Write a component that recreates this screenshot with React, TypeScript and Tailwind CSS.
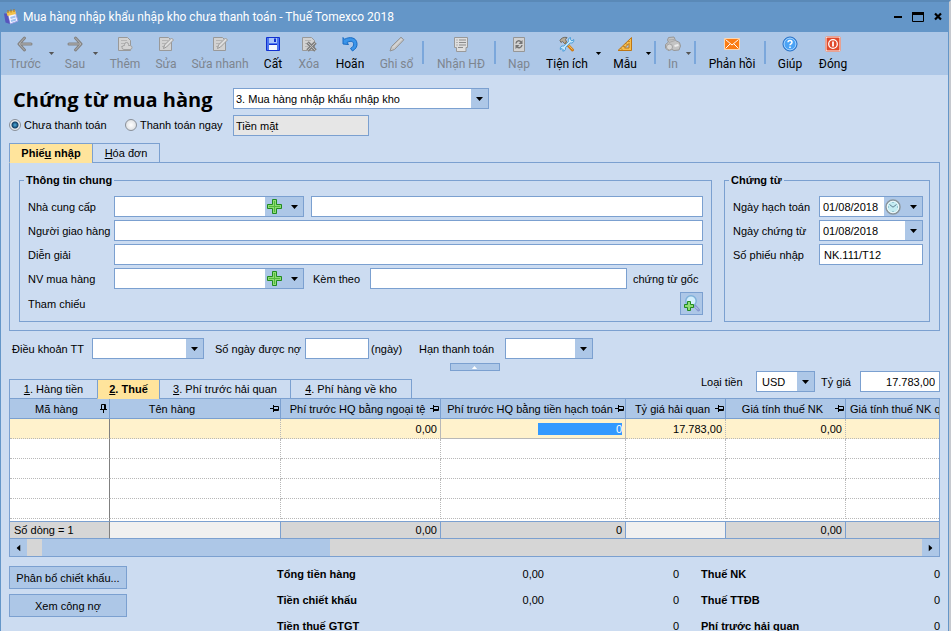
import type { ReactNode } from "react";
import clsx from "clsx";

const field =
  "h-[21px] min-w-0 border border-[#7ba0d0] bg-white px-1 text-[11px] leading-4 text-black outline-none";

function Caret({ className }: { className?: string }) {
  return (
    <svg className={clsx("h-1 w-[7px]", className)} viewBox="0 0 7 4" fill="currentColor">
      <path d="M0 0h7L3.500 4z" />
    </svg>
  );
}

function PlusIcon() {
  return (
    <svg className="h-4 w-4" viewBox="0 0 16 16">
      <path
        d="M5.500 .5h4v5h5v4h-5v5h-4v-5h-5v-4h5z"
        fill="#8fdc74"
        stroke="#218a21"
      />
      <path d="M7.500 2v11M2 7.500h11" stroke="#52b83c" />
    </svg>
  );
}

function ClockIcon() {
  return (
    <svg className="h-4 w-4" viewBox="0 0 16 16">
      <circle cx="8" cy="8" r="7" fill="#c4ecf2" stroke="#8b959b" strokeWidth="1.500" />
      <circle cx="8" cy="8" r="5.700" fill="none" stroke="#eef8fa" />
      <path d="M4.500 5.500L8 8.200l3.500-2.700" fill="none" stroke="#5d7f91" />
      <path d="M8 3v1M8 12v1M3 8h1M12 8h1" stroke="#6aa5b8" />
    </svg>
  );
}

function SearchAddIcon() {
  return (
    <svg className="h-[17px] w-[17px]" viewBox="0 0 17 17">
      <path d="M11.500 10.500l4 4.500" stroke="#8598cf" strokeWidth="3" strokeLinecap="round" />
      <path d="M12 11.500l3 3" stroke="#c9d3f5" />
      <circle cx="8" cy="6" r="5.200" fill="#d3effc" stroke="#7fb2da" strokeWidth="1.500" />
      <path
        d="M4.500 6.500h3v3h3v3h-3v3h-3v-3h-3v-3h3z"
        fill="#8fdc74"
        stroke="#218a21"
      />
    </svg>
  );
}

function Pin({ down }: { down?: boolean }) {
  return (
    <svg
      className={clsx("h-[9px] w-[9px] shrink-0", down && "-rotate-90")}
      viewBox="0 0 9 9"
      fill="none"
      stroke="#000"
    >
      <path d="M0 4.500h3M3.500 1v7M3.500 2.500h5v4h-5M3.500 5.500h5" />
    </svg>
  );
}

const page = <path d="M1.500 1.500h9l3 3v10h-12z" fill="#d2d2d2" stroke="#999" />;
const pageLines = <path d="M4 4.500h6M4 7.500h4M4 10.500h3" stroke="#b5b5b5" />;

const icons: Record<string, ReactNode> = {
  back: (
    <g fill="none" strokeLinejoin="round" strokeLinecap="round">
      <path d="M7.500 2L2 8l5.500 6M2.500 8h11.500" stroke="#838383" strokeWidth="3" />
      <path d="M7.500 2L2 8l5.500 6M2.500 8h11.500" stroke="#b2b2b2" />
    </g>
  ),
  next: (
    <g fill="none" strokeLinejoin="round" strokeLinecap="round">
      <path d="M8.500 2L14 8l-5.500 6M13.500 8H2" stroke="#838383" strokeWidth="3" />
      <path d="M8.500 2L14 8l-5.500 6M13.500 8H2" stroke="#b2b2b2" />
    </g>
  ),
  add: (
    <>
      {page}
      {pageLines}
      <path
        d="M9.500 6.500a2 2 0 0 1 2 2v1h1.500a2 2 0 0 1 0 4H7a2 2 0 0 1 0-4h.5v-1a2 2 0 0 1 2-2z"
        fill="#d4d4d4"
        stroke="#a2a2a2"
      />
    </>
  ),
  edit: (
    <>
      {page}
      {pageLines}
      <path d="M5.500 12.500l1-3.500 7-7 2 2-7 7z" fill="#dedede" stroke="#999" />
    </>
  ),
  save: (
    <>
      <path d="M1.500 1.500h13v13h-13z" fill="#4d76ee" stroke="#102fd0" />
      <path d="M4 2h8v5H4z" fill="#a9c5fb" />
      <path d="M9 2.500h2v3.500H9z" fill="#102fd0" />
      <path d="M4 9h8v5H4z" fill="#f3f7ff" />
      <path d="M4 8.500h8" stroke="#102fd0" />
    </>
  ),
  remove: (
    <>
      {page}
      {pageLines}
      <path d="M6.500 6.500l8 8m0-8l-8 8" stroke="#808080" strokeWidth="3.500" />
      <path d="M6.500 6.500l8 8m0-8l-8 8" stroke="#bdbdbd" />
    </>
  ),
  undo: (
    <path
      d="M1 1.500l1.500 1.800C7 .5 14.500 1 15 7.500c.3 3.500-1.500 5.500-4.500 7.500l-2-2.500c2.500-1.500 3.500-3 3-5C11 4.500 7.500 5 5 6.500L6.500 8.500 1 8z"
      fill="#3a95ea"
      stroke="#176bc4"
      strokeLinejoin="round"
    />
  ),
  pencil: (
    <>
      <path d="M1 15l1.500-4.500L12 1.200l2.800 2.600L5.500 13.500z" fill="#c8c8c8" stroke="#929292" />
      <path d="M4 11.500l8.500-8.500" stroke="#e2e2e2" />
    </>
  ),
  receipt: (
    <>
      <path d="M1.500 1.500h13v10h-1.500v4H3.500v-4h-2z" fill="#dedede" stroke="#999" />
      <path d="M3.500 4h1M6 4h7M3.500 6.500h1M6 6.500h7M3.500 9h1M6 9h7M5 11.500h5" stroke="#8b8b8b" />
    </>
  ),
  reload: (
    <>
      <path d="M2.500 1.500h11v14h-11z" fill="#d2d2d2" stroke="#969696" />
      <path
        d="M5 7.500C5.500 4.500 8.500 4 10 6M11 9c-.5 3-3.500 3.500-5 1.500"
        fill="none"
        stroke="#747474"
        strokeWidth="1.500"
      />
      <path d="M11.500 4v4h-4zM4.500 13V9h4z" fill="#747474" />
    </>
  ),
  tools: (
    <>
      <path d="M6 6l7.500 8" stroke="#cf7d18" strokeWidth="3" strokeLinecap="round" />
      <path d="M6.500 6l7 7.500" stroke="#f6c164" />
      <path d="M1 4.500C2 2 5 .8 8 1.500L6.500 3.500 7.500 6l-2 1.500-2-2.200L2 6.500z" fill="#b5ac9a" stroke="#6e6b66" />
      <path
        d="M11.500 1.500C9 2 9.200 4 9.500 5.500L4.800 10c-2.300-.5-4 1-3.500 3.500L3 12.500l1.500 1.500L3.500 15c2 .5 3.500-1 3-3.500l4.700-4.500c2.300.5 4.200-1 3.500-3.500L13 5l-1.700-1.500z"
        fill="#c4e8fd"
        stroke="#4b9fda"
      />
    </>
  ),
  ruler: (
    <>
      <path d="M1 14.500L14.500 1.500v13z" fill="#f5bd4e" stroke="#bd7615" strokeLinejoin="round" />
      <path d="M7.500 12L12 7.500V12z" fill="#adc7e7" stroke="#bd7615" />
      <path d="M4 12.500l1 1M6.500 10l1 1M9 7.500l1 1M11.500 5l1 1" stroke="#8e5410" />
    </>
  ),
  print: (
    <>
      <path d="M2.500 4l1-2.500 5.500-.5 1.500 3.500 4 2 1 3.500-1.500 4-5 .5-2-1-4 1L.5 12V8.500L3.500 6z" fill="#c4c4c4" stroke="#979797" strokeLinejoin="round" />
      <path d="M3.500 4l6-.5M4 6.500l6-2" stroke="#a8a8a8" />
      <circle cx="4.500" cy="11" r="3" fill="#d8d8d8" stroke="#a2a2a2" />
      <path d="M9.500 10l4-1" stroke="#eee" strokeWidth="2" />
    </>
  ),
  mail: (
    <>
      <path d="M.5 2.500h15v11H.5z" fill="#fb7c14" stroke="#f9d6b2" />
      <path d="M1.500 3.500L8 9l6.500-5.500M1.500 12.500L6 8M14.500 12.500L10 8" fill="none" stroke="#fff" />
    </>
  ),
  help: (
    <>
      <circle cx="8" cy="8" r="7" fill="#4ba3f5" stroke="#1f68c0" />
      <circle cx="8" cy="8" r="5.900" fill="none" stroke="#a7d4ff" />
      <path
        d="M6 6.300c0-2.500 4-2.500 4 0 0 1.600-2 1.500-2 3M8 10.500v1.500"
        fill="none"
        stroke="#fff"
        strokeWidth="1.500"
      />
    </>
  ),
  power: (
    <>
      <rect x=".5" y=".5" width="15" height="15" rx="1.500" fill="#fff" stroke="#e5a294" />
      <rect x="1.500" y="1.500" width="13" height="13" rx="1" fill="#e0492b" />
      <circle cx="8" cy="8" r="4.300" fill="none" stroke="#fff" strokeWidth="1.300" />
      <path d="M8 5.500v5" stroke="#fff" strokeWidth="1.800" />
    </>
  ),
};

type Tool = {
  label: string;
  icon: string;
  width: string;
  off?: boolean;
  menu?: boolean;
  line?: boolean;
};

const tools: Tool[] = [
  { label: "Trước", icon: "back", width: "w-10", off: true, menu: true },
  { label: "Sau", icon: "next", width: "ml-1 w-7", off: true, menu: true },
  { label: "Thêm", icon: "add", width: "w-12", off: true },
  { label: "Sửa", icon: "edit", width: "w-[34px]", off: true },
  { label: "Sửa nhanh", icon: "edit", width: "w-[74px]", off: true },
  { label: "Cất", icon: "save", width: "w-8" },
  { label: "Xóa", icon: "remove", width: "w-10", off: true },
  { label: "Hoãn", icon: "undo", width: "w-[42px]" },
  { label: "Ghi sổ", icon: "pencil", width: "w-[51px]", off: true, line: true },
  { label: "Nhận HĐ", icon: "receipt", width: "ml-1 w-[66px]", off: true, line: true },
  { label: "Nạp", icon: "reload", width: "w-[46px]", off: true },
  { label: "Tiện ích", icon: "tools", width: "w-[50px]", menu: true },
  { label: "Mẫu", icon: "ruler", width: "ml-1 w-[34px]", menu: true, line: true },
  { label: "In", icon: "print", width: "ml-2 w-[18px]", off: true, menu: true, line: true },
  { label: "Phản hồi", icon: "mail", width: "ml-1 w-16", line: true },
  { label: "Giúp", icon: "help", width: "w-12" },
  { label: "Đóng", icon: "power", width: "w-[38px]" },
];

function Toolbar() {
  return (
    <div className="flex h-[43px] shrink-0 overflow-hidden bg-[#adc7e7] pl-1 font-[Roboto,'Noto_Sans',sans-serif] text-[12px]">
      {tools.map((t) => (
        <div
          key={t.label}
          className={clsx("flex shrink-0", t.off ? "text-[#7d858f]" : "text-black")}
        >
          <button
            disabled={t.off}
            className={clsx("flex flex-col items-center pt-1 leading-4 whitespace-nowrap", t.width)}
          >
            <svg className="mb-1 h-4 w-4 shrink-0" viewBox="0 0 16 16">
              {icons[t.icon]}
            </svg>
            <span>{t.label}</span>
          </button>
          {t.menu && (
            <button
              disabled={t.off}
              aria-label={`${t.label}: thêm`}
              className="flex w-3 justify-center pt-5"
            >
              <Caret className={clsx("h-[3px] w-[5px]", t.off && "text-[#555]")} />
            </button>
          )}
          {t.line && <span className="mt-[9px] h-[23px] w-0.5 bg-[#7ba7db]" />}
        </div>
      ))}
    </div>
  );
}

type DropDownProps = {
  id: string;
  options?: string[];
  className?: string;
  plus?: boolean;
};

function DropDown({ id, options = [""], className, plus }: DropDownProps) {
  return (
    <div
      className={clsx(
        "relative flex h-[21px] shrink-0 border border-[#7ba0d0] bg-white",
        className
      )}
    >
      <select
        id={id}
        className={clsx(
          "h-full w-full appearance-none bg-transparent text-[11px] leading-4 outline-none",
          plus ? "pr-10" : "pr-5",
          id === "currency" ? "pl-[5px]" : "pl-0.5"
        )}
      >
        {options.map((o) => (
          <option key={o}>{o}</option>
        ))}
      </select>
      <span
        className={clsx(
          "pointer-events-none absolute inset-y-0 right-0 flex items-center justify-end bg-[#adc7e7] pr-[5px]",
          plus ? "w-[38px]" : "w-[17px]"
        )}
      >
        <Caret />
      </span>
      {plus && (
        <button aria-label="Thêm mới" className="absolute inset-y-0 right-5 flex items-center">
          <PlusIcon />
        </button>
      )}
    </div>
  );
}

function DateField({ id, value, clock }: { id: string; value: string; clock?: boolean }) {
  return (
    <div className="flex h-[21px] w-[104px] shrink-0 border border-[#7ba0d0] bg-white">
      <input
        id={id}
        defaultValue={value}
        className="w-0 flex-1 pl-[3px] text-[11px] leading-4 outline-none"
      />
      {clock && (
        <button aria-label="Chọn giờ" className="flex w-[21px] items-center bg-[#adc7e7] pl-px">
          <ClockIcon />
        </button>
      )}
      <button
        aria-label="Chọn ngày"
        className="flex w-[17px] items-center justify-center bg-[#adc7e7]"
      >
        <Caret />
      </button>
    </div>
  );
}

function Tab({
  active,
  className,
  children,
}: {
  active?: boolean;
  className: string;
  children: ReactNode;
}) {
  return (
    <button
      role="tab"
      aria-selected={!!active}
      className={clsx(
        "h-5 shrink-0 border border-[#7ba0d0] leading-4 whitespace-nowrap",
        active && "border-b-[#ffe49c] bg-[#ffe49c] font-bold",
        className
      )}
    >
      {children}
    </button>
  );
}

function GeneralInfo() {
  return (
    <fieldset className="min-w-0 flex-1 border border-[#7ba0d0] pr-2 pb-1.5 pl-2">
      <legend className="-ml-1 px-0.5 leading-4 font-bold">Thông tin chung</legend>
      <div className="flex flex-col gap-[3px] pt-2">
        <div className="flex items-center">
          <label htmlFor="supplier" className="w-[86px] shrink-0">
            Nhà cung cấp
          </label>
          <DropDown id="supplier" plus className="w-[190px]" />
          <input aria-label="Tên nhà cung cấp" className={clsx(field, "ml-[7px] flex-1")} />
        </div>
        <div className="flex items-center">
          <label htmlFor="shipper" className="w-[86px] shrink-0 whitespace-nowrap">
            Người giao hàng
          </label>
          <input id="shipper" className={clsx(field, "flex-1")} />
        </div>
        <div className="flex items-center">
          <label htmlFor="note" className="w-[86px] shrink-0">
            Diễn giải
          </label>
          <input id="note" className={clsx(field, "flex-1")} />
        </div>
        <div className="flex items-center">
          <label htmlFor="buyer" className="w-[86px] shrink-0">
            NV mua hàng
          </label>
          <DropDown id="buyer" plus className="w-[190px]" />
          <label htmlFor="attached" className="ml-[9px] w-[57px] shrink-0">
            Kèm theo
          </label>
          <input id="attached" className={clsx(field, "flex-1")} />
          <span className="ml-1.5 w-[70px] shrink-0">chứng từ gốc</span>
        </div>
        <div className="flex items-center justify-between">
          <span>Tham chiếu</span>
          <button
            aria-label="Chọn tham chiếu"
            className="flex h-[23px] w-[23px] items-center justify-center border border-[#7ba0d0] bg-[#adc7e7]"
          >
            <SearchAddIcon />
          </button>
        </div>
      </div>
    </fieldset>
  );
}

function VoucherInfo() {
  return (
    <fieldset className="w-[206px] shrink-0 border border-[#7ba0d0] pl-2">
      <legend className="-ml-1 px-0.5 leading-4 font-bold">Chứng từ</legend>
      <div className="flex flex-col gap-[3px] pt-2">
        <div className="flex items-center">
          <label htmlFor="posted" className="w-[86px] shrink-0 whitespace-nowrap">
            Ngày hạch toán
          </label>
          <DateField id="posted" value="01/08/2018" clock />
        </div>
        <div className="flex items-center">
          <label htmlFor="issued" className="w-[86px] shrink-0">
            Ngày chứng từ
          </label>
          <DateField id="issued" value="01/08/2018" />
        </div>
        <div className="flex items-center">
          <label htmlFor="number" className="w-[86px] shrink-0">
            Số phiếu nhập
          </label>
          <input id="number" defaultValue="NK.111/T12" className={clsx(field, "w-[104px]")} />
        </div>
      </div>
    </fieldset>
  );
}

const columns = [
  { title: "Mã hàng", width: "w-[100px]", value: "", total: "Số dòng = 1" },
  { title: "Tên hàng", width: "w-[171px]", value: "", total: "" },
  { title: "Phí trước HQ bằng ngoại tệ", width: "w-[160px]", value: "0,00", total: "0,00" },
  { title: "Phí trước HQ bằng tiền hạch toán", width: "w-[185px]", value: "0", total: "0" },
  { title: "Tỷ giá hải quan", width: "w-[100px]", value: "17.783,00", total: "" },
  { title: "Giá tính thuế NK", width: "w-[120px]", value: "0,00", total: "0,00" },
  { title: "Giá tính thuế NK q", width: "", value: "", total: " " },
];

function TaxGrid() {
  return (
    <div className="border border-[#7ba0d0] bg-white">
      <table className="w-full table-fixed border-separate border-spacing-0">
        <thead>
          <tr>
            {columns.map((c, i) => (
              <th
                key={c.title}
                className={clsx(
                  "h-5 overflow-hidden border-b border-[#7ba0d0] bg-[#adc7e7] p-0 font-normal",
                  i < 6 && "border-r",
                  c.width
                )}
              >
                <div className="flex items-center pr-px pl-1 whitespace-nowrap">
                  <span className={clsx("flex-1", i === 6 && "text-left", i === 1 && "pr-10")}>
                    {c.title}
                  </span>
                  {i < 6 && <Pin down={i === 0} />}
                </div>
              </th>
            ))}
          </tr>
        </thead>
        <tbody>
          <tr className="bg-[#fff2cc]">
            {columns.map((c, i) => (
              <td
                key={c.title}
                className={clsx(
                  "h-5 border-b p-0 pr-[3px] text-right",
                  i === 3 ? "border-b-[#b8b8b8]" : "border-b-[#b8b8b8] [border-bottom-style:dotted]",
                  i === 0 && "border-r border-r-[#808080]",
                  (i === 2 || i === 3) && "border-r border-r-[#b8b8b8]",
                  (i === 1 || i === 4 || i === 5) &&
                    "border-r border-r-[#b8b8b8] [border-right-style:dotted]"
                )}
              >
                {i === 3 ? (
                  <input
                    aria-label={c.title}
                    defaultValue={c.value}
                    className="block h-3 w-full border-l-[97px] border-[#fff2cc] bg-[#3399ff] text-right text-[11px] leading-3 text-white outline-none"
                  />
                ) : (
                  c.value
                )}
              </td>
            ))}
          </tr>
          {[1, 2, 3, 4].map((row) => (
            <tr key={row}>
              {columns.map((c, i) => (
                <td
                  key={c.title}
                  className={clsx(
                    "h-5 border-b border-b-[#b8b8b8] p-0 [border-bottom-style:dotted]",
                    i === 0 && "border-r border-r-[#808080]",
                    i > 0 && i < 6 && "border-r border-r-[#b8b8b8] [border-right-style:dotted]"
                  )}
                />
              ))}
            </tr>
          ))}
          <tr>
            <td className="h-0.5 border-r border-r-[#808080] p-0" />
            <td colSpan={6} className="p-0" />
          </tr>
        </tbody>
        <tfoot>
          <tr>
            {columns.map((c, i) => (
              <td
                key={c.title}
                className={clsx(
                  "h-[18px] border-y border-y-[#7ba0d0] p-0 leading-4",
                  i === 0 ? "border-r border-r-[#808080] pl-1" : "pr-[3px] text-right",
                  i > 0 && i < 6 && "border-r border-r-[#7ba0d0]",
                  c.total ? "bg-[#d6d6d6]" : "bg-[#f0f0f0]"
                )}
              >
                {c.total}
              </td>
            ))}
          </tr>
        </tfoot>
      </table>
      <div className="flex h-[17px] bg-[#d6d6d6]">
        <button
          aria-label="Cuộn trái"
          className="flex w-[17px] items-center justify-center bg-[#adc7e7]"
        >
          <Caret className="rotate-90" />
        </button>
        <span className="ml-[15px] w-[31%] bg-[#adc7e7]" />
        <button
          aria-label="Cuộn phải"
          className="ml-auto flex w-[17px] items-center justify-center bg-[#adc7e7]"
        >
          <Caret className="-rotate-90" />
        </button>
      </div>
    </div>
  );
}

const totals = [
  ["Tổng tiền hàng", "0,00", "0", "Thuế NK", "0"],
  ["Tiền chiết khấu", "0,00", "0", "Thuế TTĐB", "0"],
  ["Tiền thuế GTGT", "", "0", "Phí trước hải quan", "0"],
];

function Summary() {
  return (
    <div className="flex pt-1">
      <div className="flex w-[118px] shrink-0 flex-col gap-[5px] pt-[5px]">
        <button className="h-[23px] border border-[#7ba0d0] bg-[#adc7e7]">
          Phân bổ chiết khấu...
        </button>
        <button className="h-[23px] border border-[#7ba0d0] bg-[#adc7e7]">Xem công nợ</button>
      </div>
      <table className="ml-[150px] flex-1 table-fixed">
        <tbody>
          {totals.map(([label, foreign, local, tax, amount]) => (
            <tr key={label} className="h-[26px]">
              <th className="w-[140px] p-0 text-left">{label}</th>
              <td className="w-[127px] p-0 text-right">{foreign}</td>
              <td className="w-[135px] p-0 text-right">{local}</td>
              <th className="p-0 pl-[22px] text-left">{tax}</th>
              <td className="p-0 text-right">{amount}</td>
            </tr>
          ))}
        </tbody>
      </table>
    </div>
  );
}

function TitleBar() {
  return (
    <header className="flex h-[30px] shrink-0 items-center bg-[#6496c8] pr-1.5 pl-0.5 font-[Roboto,'Noto_Sans',sans-serif] text-[12px] text-white">
      <svg className="h-4 w-4 shrink-0" viewBox="0 0 16 16">
        <path d="M4.500 4.500L12 2l3 10-8 3z" fill="#f6f4ff" stroke="#9d9ee6" />
        <path d="M1 4.500h3.500L7 15l-4.500-1.500z" fill="#5755bd" />
        <path d="M3.500 3L12 1l1 4-8.500 2z" fill="#f2c24c" />
        <path d="M5 1v3M8 .5v3M11 0v3" stroke="#a8741c" />
        <path d="M7.500 9l5-1.500M8 12l5-1.500" stroke="#9fc1f0" strokeWidth="2" />
      </svg>
      <h1 className="ml-1 flex-1 truncate leading-5">
        Mua hàng nhập khẩu nhập kho chưa thanh toán - Thuế Tomexco 2018
      </h1>
      <div className="flex items-center gap-2.5 text-black">
        <button aria-label="Thu nhỏ">
          <svg className="h-3 w-2" viewBox="0 0 8 12">
            <path d="M0 6h8" stroke="currentColor" strokeWidth="2" />
          </svg>
        </button>
        <button aria-label="Phóng to">
          <svg className="h-3 w-3" viewBox="0 0 12 12">
            <path d="M.5 1.500h11v9H.5z" fill="none" stroke="currentColor" />
            <path d="M0 2.500h12" stroke="currentColor" strokeWidth="3" />
          </svg>
        </button>
        <button aria-label="Đóng cửa sổ">
          <svg className="h-3 w-2" viewBox="0 0 8 12">
            <path d="M1 2.500l6 6m0-6l-6 6" stroke="currentColor" strokeWidth="2.200" />
          </svg>
        </button>
      </div>
    </header>
  );
}

const radio =
  "h-3 w-3 shrink-0 appearance-none rounded-full border border-[#8a9099] bg-[radial-gradient(#ffffff,#d4d7db)] checked:bg-[radial-gradient(#4fb0e0_0,#123f66_3px,#e8eaec_4px)]";

export default function App() {
  return (
    <div className="flex h-screen flex-col overflow-hidden border-t-2 border-r-2 border-t-[#5a89b7] border-r-[#c6c9cf] bg-[#ccdcf1] font-['Liberation_Sans',Arial,sans-serif] text-[11px] leading-4 text-black">
      <div className="flex min-h-0 flex-1 flex-col border-x border-[#6496c8]">
        <TitleBar />
        <Toolbar />
        <main className="flex min-h-0 flex-1 flex-col pr-2 pl-2">
          <div className="flex pt-[13px]">
            <div className="w-[224px] shrink-0">
              <h2 className="pl-1 font-['Open_Sans','Noto_Sans',sans-serif] text-[20px] leading-6 font-bold whitespace-nowrap">
                Chứng từ mua hàng
              </h2>
              <div className="flex h-[24px] items-center pt-0.5">
                <label className="flex w-[116px] items-center gap-[3px] whitespace-nowrap">
                  <input type="radio" name="payment" defaultChecked className={radio} />
                  Chưa thanh toán
                </label>
                <label className="flex items-center gap-[3px] whitespace-nowrap">
                  <input type="radio" name="payment" className={radio} />
                  Thanh toán ngay
                </label>
              </div>
            </div>
            <div className="flex w-64 flex-col gap-1.5">
              <DropDown id="kind" options={["3. Mua hàng nhập khẩu nhập kho"]} />
              <input
                aria-label="Hình thức thanh toán"
                readOnly
                defaultValue="Tiền mặt"
                className="h-[21px] w-[136px] border border-[#7ba0d0] bg-[#e6e6e6] px-0.5 text-[11px] leading-4 outline-none"
              />
            </div>
          </div>

          <div role="tablist" className="relative mt-[7px] -mb-px flex shrink-0">
            <Tab active className="w-[84px]">
              Phiế<u>u</u> nhập
            </Tab>
            <Tab className="-ml-px w-[68px]">
              <u>H</u>óa đơn
            </Tab>
          </div>
          <section className="flex gap-3 border border-[#7ba0d0] px-[9px] pt-[9px] pb-2">
            <GeneralInfo />
            <VoucherInfo />
          </section>

          <div className="mt-[7px] flex items-center pl-[3px]">
            <label htmlFor="terms" className="w-20">
              Điều khoản TT
            </label>
            <DropDown id="terms" className="w-28" />
            <label htmlFor="days" className="ml-[11px] w-[90px]">
              Số ngày được nợ
            </label>
            <input id="days" className={clsx(field, "w-16")} />
            <span className="ml-0.5 w-12">(ngày)</span>
            <label htmlFor="due" className="w-[86px]">
              Hạn thanh toán
            </label>
            <DropDown id="due" className="w-[88px]" />
          </div>
          <button
            aria-label="Thu gọn"
            className="mx-auto mt-1 flex h-2 w-[50px] shrink-0 items-center justify-center border border-[#7ba0d0] bg-[#adc7e7] text-white"
          >
            <Caret className="h-[3px] w-[5px] rotate-180" />
          </button>

          <div className="relative -mb-px flex items-end justify-between">
            <div role="tablist" className="flex">
              <Tab className="w-[89px]">
                <u>1</u>. Hàng tiền
              </Tab>
              <Tab active className="-ml-px w-[63px]">
                <u>2</u>. Thuế
              </Tab>
              <Tab className="-ml-px w-[132px]">
                <u>3</u>. Phí trước hải quan
              </Tab>
              <Tab className="-ml-px w-[122px]">
                <u>4</u>. Phí hàng về kho
              </Tab>
            </div>
            <div className="flex items-center pb-[7px]">
              <label htmlFor="currency" className="w-[55px]">
                Loại tiền
              </label>
              <DropDown id="currency" options={["USD"]} className="w-[59px]" />
              <label htmlFor="rate" className="ml-1.5 w-[39px]">
                Tỷ giá
              </label>
              <input
                id="rate"
                defaultValue="17.783,00"
                className={clsx(field, "w-20 text-right")}
              />
            </div>
          </div>
          <TaxGrid />
          <Summary />
        </main>
      </div>
    </div>
  );
}
